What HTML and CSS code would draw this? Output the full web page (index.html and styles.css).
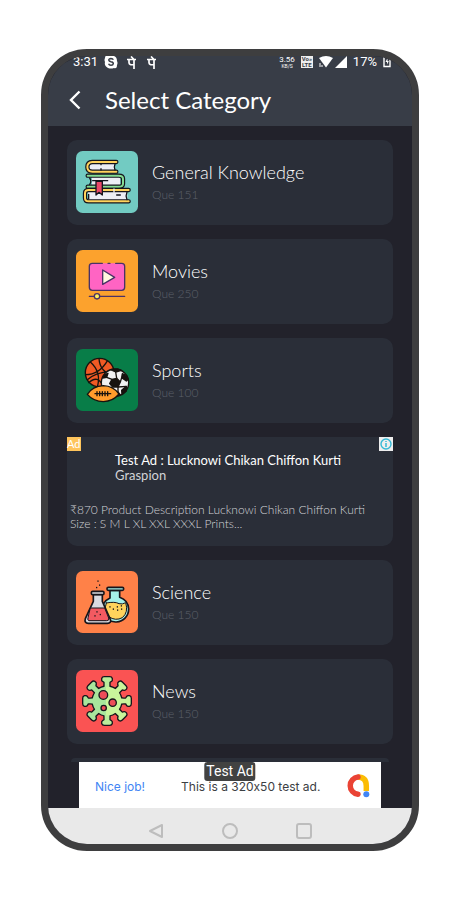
FILE: index.html
```
<!DOCTYPE html>
<html lang="en">
  <head>
    <meta charset="UTF-8" />
    <meta name="viewport" content="width=device-width, initial-scale=1.0" />
    <title>Select Category</title>
    <link rel="stylesheet" href="styles.css">
  </head>
  <body>
    <div class="phone">
      <header class="header">
        <div class="status">
          <div class="status-group status-left">
            <span class="clock">3:31</span>
            <svg class="icon-app" viewBox="0 0 14 14" width="14" height="14">
              <path d="M1 3Q1 0 4 1Q7 0 10 1Q13 2 13 6Q14 8 13 10Q13 14 10 13Q7 14 4 13Q0 11 1 7Q0 5 1 3Z" fill="#fff" />
              <path d="M9.3 4.7Q8.800 3.500 7 3.500Q4.700 3.600 4.800 5.200Q5 6.400 7 6.800Q9.400 7.200 9.300 8.600Q9.100 10.200 7 10.200Q5.100 10.200 4.600 8.800" fill="none" stroke="#383d47" stroke-width="1.500" />
            </svg>
            <svg class="icon-app" viewBox="0 0 14 14" width="14" height="14" fill="none" stroke="#fff" stroke-width="1.700">
              <path d="M3 4.500H12M10 4.500V14M5 4.500V7.500Q5 10.500 10 9.500M10 4.500L7 1.500" />
            </svg>
            <svg class="icon-app" viewBox="0 0 14 14" width="14" height="14" fill="none" stroke="#fff" stroke-width="1.700">
              <path d="M3 4.500H12M10 4.500V14M5 4.500V7.500Q5 10.500 10 9.500M10 4.500L7 1.500" />
            </svg>
          </div>
          <div class="status-group status-right">
            <span class="speed"><b>3.56</b><small>KB/S</small></span>
            <span class="volte"><b>Vo»</b><b>LTE</b></span>
            <svg viewBox="0 0 28 12" width="28" height="12" fill="#fff">
              <path d="M0 2Q7-2 14 2L7 11.500Z" />
              <path d="M28 0V12H16Z" />
              <path d="M1 7V11M3 9V11" stroke="#fff" stroke-width="1" />
            </svg>
            <span class="battery-text">17%</span>
            <svg viewBox="0 0 8 12" width="8" height="12">
              <path d="M1 0V10.500H7V2H5.500V0" fill="none" stroke="#fff" stroke-width="1.400" />
              <path d="M4.500 2L2.500 6H4V8.500L5.800 5H4.500Z" fill="#fff" />
            </svg>
          </div>
        </div>
        <div class="title-bar">
          <button class="back" aria-label="Back">
            <svg viewBox="0 0 12 20" width="12" height="20">
              <path d="M10.500 1.500L2 10L10.500 18.500" fill="none" stroke="#fff" stroke-width="2.400" />
            </svg>
          </button>
          <h1>Select Category</h1>
        </div>
      </header>

      <main class="list">
        <a class="card" href="#general-knowledge">
          <svg class="tile" viewBox="0 0 186 186">
            <rect width="186" height="186" rx="20" fill="#72cbc2" />
            <g stroke-linecap="round" stroke-linejoin="round">
              <path d="M118 36H52Q40 36 40 48T52 60H118Q112 48 118 36Z" fill="#edeef5" />
              <path d="M121 33H49Q34 34 34 48T49 62H121" fill="none" stroke="#15151c" stroke-width="13" />
              <path d="M121 33H49Q34 34 34 48T49 62H121" fill="none" stroke="#ffd35c" stroke-width="6" />
              <path d="M117 39Q113 48 117 57M75 38V41M75 53V57" fill="none" stroke="#15151c" stroke-width="4" />
              <path d="M48 78H132V102H48Z" fill="#edeef5" />
              <path d="M35 74H128Q141 74 141 83V98Q141 107 128 107H35" fill="none" stroke="#15151c" stroke-width="13" />
              <path d="M35 74H128Q141 74 141 83V98Q141 107 128 107H35" fill="none" stroke="#83dc91" stroke-width="6" />
              <path d="M41 81Q48 91 41 100M50 89H95" fill="none" stroke="#15151c" stroke-width="4" />
              <path d="M36 121H154V147H36Z" fill="#edeef5" />
              <path d="M158 117H38Q27 117 27 127V141Q27 151 38 151H158" fill="none" stroke="#15151c" stroke-width="13" />
              <path d="M158 117H38Q27 117 27 127V141Q27 151 38 151H158" fill="none" stroke="#ffd35c" stroke-width="6" />
              <path d="M153 123Q148 134 153 146M38 130V143M122 132H133" fill="none" stroke="#15151c" stroke-width="4" />
              <path d="M114 114V124" stroke="#edeef5" stroke-width="4" />
              <path d="M60 91H79V132L69 124L60 132Z" fill="#eb4868" stroke="#15151c" stroke-width="4" />
            </g>
          </svg>
          <span class="info">
            <span class="name">General Knowledge</span>
            <span class="count">Que 151</span>
          </span>
        </a>

        <a class="card" href="#movies">
          <svg class="tile" viewBox="0 0 186 186">
            <rect width="186" height="186" rx="20" fill="#fca22d" />
            <rect x="40" y="40" width="106" height="81" rx="9" fill="#ff64c3" />
            <path d="M79 40H49Q40 40 40 49V112Q40 121 49 121H137Q146 121 146 112V49Q146 40 137 40H119M96 40H102" fill="none" stroke="#4a3266" stroke-width="4" stroke-linecap="round" />
            <path d="M80 60L116 82L80 103Z" fill="#fff8df" stroke="#4a3266" stroke-width="4" stroke-linejoin="round" />
            <path d="M40 139H146" stroke="#4a3266" stroke-width="4" stroke-linecap="round" />
            <circle cx="63" cy="139" r="8" fill="#fff45c" stroke="#4a3266" stroke-width="4" />
          </svg>
          <span class="info">
            <span class="name">Movies</span>
            <span class="count">Que 250</span>
          </span>
        </a>

        <a class="card" href="#sports">
          <svg class="tile" viewBox="0 0 186 186">
            <rect width="186" height="186" rx="20" fill="#087d48" />
            <g stroke="#17130f" stroke-width="4" stroke-linejoin="round">
              <circle cx="71" cy="71" r="43" fill="#f15a24" />
              <path d="M43 39Q77 69 64 114M69 28Q71 69 111 79M28 77Q70 77 95 34M33 93Q64 65 114 69M37 102Q66 75 82 113" fill="none" />
              <circle cx="117" cy="101" r="41" fill="#f1f1f1" />
              <path d="M108 91L122 88L133 99L126 114H110L101 104Z" fill="#17130f" />
              <path d="M104 62L119 69L136 64L126 60ZM139 74L137 86L151 96L157 91L152 80ZM151 112L137 124L138 137L151 126ZM80 87L92 85L96 73L87 76ZM102 130L117 137L126 129L133 138L115 142Z" fill="#17130f" />
              <path d="M119 69L122 88M137 86L133 99M151 112L126 114M92 85L108 91M126 114L126 129" />
              <path d="M34 136Q49 112 82 110Q112 111 129 135Q111 157 82 158Q52 157 34 136Z" fill="#ff9c2c" />
              <path d="M57 134H104M63 128V140M71 128V140M79 128V140M87 128V140M95 128V140" stroke-linecap="round" />
            </g>
          </svg>
          <span class="info">
            <span class="name">Sports</span>
            <span class="count">Que 100</span>
          </span>
        </a>

        <section class="ad-card">
          <div class="ad-marks">
            <span class="ad-label">Ad</span>
            <button class="ad-info" aria-label="Ad information">
              <svg viewBox="0 0 14 14" width="14" height="14">
                <circle cx="7" cy="7" r="5" fill="none" stroke="#35b9d6" stroke-width="1.400" />
                <path d="M7 6V10M7 4V5" stroke="#35b9d6" stroke-width="1.500" />
              </svg>
            </button>
          </div>
          <div class="ad-heading">
            <strong>Test Ad : Lucknowi Chikan Chiffon Kurti</strong>
            <span>Graspion</span>
          </div>
          <p>₹870 Product Description Lucknowi Chikan Chiffon Kurti<br />Size : S M L XL XXL XXXL Prints...</p>
        </section>

        <a class="card" href="#science">
          <svg class="tile" viewBox="0 0 186 186">
            <rect width="186" height="186" rx="20" fill="#ff8148" />
            <g stroke="#17151b" stroke-width="5" stroke-linejoin="round" stroke-linecap="round">
              <path d="M102 58V81C85 89 78 101 80 119C82 141 101 154 121 153C143 151 158 135 158 114C157 96 146 84 131 79V58Z" fill="#a5f0e9" />
              <path d="M91 96Q117 91 129 98Q139 101 149 95Q158 124 139 140Q119 151 98 137Q82 121 91 96Z" fill="#ffd35c" stroke-width="3" />
              <rect x="93" y="49" width="50" height="9" rx="4" fill="#a5f0e9" />
              <path d="M52 70V91L28 143Q24 156 37 157H94Q107 156 103 145L79 91V70Z" fill="#dadbe1" />
              <path d="M44 111H86L98 141Q101 149 92 149H39Q33 148 36 140Z" fill="#f25a61" stroke-width="3" />
              <rect x="46" y="61" width="38" height="10" rx="4" fill="#dadbe1" />
              <path d="M66 30V31M71 42V43M62 49V50M63 122V123M57 134V135M73 130V131M102 107V108M112 114V115M124 107V108M136 104V105M137 114V115M125 117V118" stroke-width="4" />
            </g>
          </svg>
          <span class="info">
            <span class="name">Science</span>
            <span class="count">Que 150</span>
          </span>
        </a>

        <a class="card" href="#news">
          <svg class="tile" viewBox="0 0 186 186">
            <defs>
              <linearGradient id="virus-fill">
                <stop offset="45%" stop-color="#a8e69c" />
                <stop offset="45%" stop-color="#c9f59b" />
              </linearGradient>
              <path id="spike" d="M84 58Q87 47 86 37Q85 34 81 33Q78 31 79 26Q80 22 85 22H101Q106 22 107 26Q108 31 105 33Q101 34 100 37Q99 47 102 58Z" />
            </defs>
            <rect width="186" height="186" rx="20" fill="#fa5353" />
            <g stroke="#17151b" stroke-width="8" stroke-linejoin="round">
              <use href="#spike" />
              <use href="#spike" transform="rotate(45 93 93)" />
              <use href="#spike" transform="rotate(90 93 93)" />
              <use href="#spike" transform="rotate(135 93 93)" />
              <use href="#spike" transform="rotate(180 93 93)" />
              <use href="#spike" transform="rotate(225 93 93)" />
              <use href="#spike" transform="rotate(270 93 93)" />
              <use href="#spike" transform="rotate(315 93 93)" />
              <circle cx="93" cy="93" r="43" />
            </g>
            <g fill="#b9ed9b">
              <use href="#spike" />
              <use href="#spike" transform="rotate(45 93 93)" fill="#c9f59b" />
              <use href="#spike" transform="rotate(90 93 93)" fill="#c9f59b" />
              <use href="#spike" transform="rotate(135 93 93)" fill="#c9f59b" />
              <use href="#spike" transform="rotate(180 93 93)" />
              <use href="#spike" transform="rotate(225 93 93)" fill="#a8e69c" />
              <use href="#spike" transform="rotate(270 93 93)" fill="#a8e69c" />
              <use href="#spike" transform="rotate(315 93 93)" fill="#a8e69c" />
              <circle cx="93" cy="93" r="43" fill="url(#virus-fill)" />
            </g>
            <g fill="#ed4d59" stroke="#17151b" stroke-width="4">
              <circle cx="82" cy="75" r="13" />
              <circle cx="110" cy="98" r="11" />
              <circle cx="83" cy="114" r="8" />
            </g>
          </svg>
          <span class="info">
            <span class="name">News</span>
            <span class="count">Que 150</span>
          </span>
        </a>

        <div class="next-card"></div>
      </main>

      <aside class="banner">
        <span class="badge">Test Ad</span>
        <span class="nice">Nice job!</span>
        <span class="banner-text">This is a 320x50 test ad.</span>
        <svg viewBox="0 0 24 24" width="24" height="24" fill="none" stroke-width="5.500">
          <path d="M12 3Q20.300 3 20.300 12V17" stroke="#fbbc04" />
          <path d="M12 3A8.700 8.700 0 0 0 12 20.300" stroke="#ea4335" stroke-linecap="round" />
          <circle cx="20.300" cy="20.300" r="3" fill="#4285f4" />
        </svg>
      </aside>

      <nav class="nav">
        <button aria-label="Back">
          <svg viewBox="0 0 16 16" width="16" height="16"><path d="M14 2V14L2 8Z" /></svg>
        </button>
        <button aria-label="Home">
          <svg viewBox="0 0 16 16" width="16" height="16"><circle cx="8" cy="8" r="7" /></svg>
        </button>
        <button aria-label="Recent apps">
          <svg viewBox="0 0 16 16" width="16" height="16"><rect x="1" y="1" width="14" height="14" rx="2" /></svg>
        </button>
      </nav>
    </div>
  </body>
</html>
```
FILE: styles.css
```
* {
  box-sizing: border-box;
}

body {
  margin: 0;
  padding: 49px 41px;
  background-color: white;
  font-family: Lato, "Noto Sans", sans-serif;
}

button {
  display: flex;
  padding: 0;
  border: none;
  background: none;
  cursor: pointer;
}

svg {
  display: block;
  flex-shrink: 0;
}

.phone {
  max-width: 480px;
  margin: 0 auto;
  overflow: hidden;
  border: 7px solid #3e3e3f;
  border-radius: 46px;
  background-color: #22222b;
}

.header {
  background-color: #383d47;
  color: white;
}

.status {
  display: flex;
  justify-content: space-between;
  height: 12px;
  padding: 0 21px 0 25px;
  font-family: Roboto, sans-serif;
  font-size: 13px;
  line-height: 12px;
}

.status-group {
  display: flex;
  align-items: center;
}

.status-left {
  gap: 6px;
}

.status-right {
  gap: 6px;
}

.speed,
.volte {
  display: flex;
  flex-direction: column;
  align-items: center;
}

.speed b {
  font-size: 8px;
  font-weight: 400;
  line-height: 8px;
}

.speed small {
  font-size: 5px;
  line-height: 5px;
}

.volte {
  width: 12px;
  background-color: #eee;
  color: #383d47;
  font-size: 6px;
  line-height: 6px;
}

.title-bar {
  display: flex;
  align-items: center;
  gap: 24px;
  height: 58px;
  padding: 5px 21px 0;
}

.title-bar h1 {
  margin: 0;
  font-size: 24px;
  font-weight: 400;
  line-height: 30px;
}

.list {
  display: flex;
  flex-direction: column;
  gap: 14px;
  padding: 14px 19px 0;
}

.card {
  display: flex;
  align-items: center;
  gap: 14px;
  padding: 11px 9px 12px;
  border-radius: 10px;
  background-color: #2a2e38;
  color: #fff;
  text-decoration: none;
}

.tile {
  width: 62px;
  height: 62px;
}

.info {
  display: flex;
  flex-direction: column;
  gap: 4px;
}

.name {
  font-size: 18px;
  font-weight: 300;
  line-height: 22px;
}

.count {
  color: #5c6069;
  font-size: 12px;
  font-weight: 300;
  line-height: 16px;
}

.ad-card {
  padding-bottom: 15px;
  border-radius: 0 0 10px 10px;
  background-color: #2a2e38;
  color: #d2d3d7;
}

.ad-marks {
  display: flex;
  justify-content: space-between;
}

.ad-label {
  width: 14px;
  background-color: #fec45c;
  color: white;
  font-size: 11px;
  line-height: 14px;
}

.ad-info {
  background-color: #eee;
}

.ad-heading {
  display: flex;
  flex-direction: column;
  padding: 2px 0 0 48px;
  font-size: 13px;
  line-height: 15px;
}

.ad-heading strong {
  color: white;
  font-weight: 400;
}

.ad-card p {
  margin: 20px 0 0;
  padding: 0 3px;
  font-size: 12px;
  font-weight: 300;
  line-height: 14px;
}

.next-card {
  height: 4px;
  margin: 0 4px;
  border-radius: 8px 8px 0 0;
  background-color: #2a2e38;
}

.banner {
  position: relative;
  display: flex;
  align-items: center;
  height: 46px;
  margin: 0 31px;
  padding: 2px 11px 0 16px;
  background-color: white;
  color: #3c4043;
  font-family: Inter, Roboto, sans-serif;
  font-size: 12px;
  font-variant-ligatures: no-contextual;
  white-space: nowrap;
}

.banner svg {
  margin-left: auto;
}

.nice {
  color: #4285f4;
}

.banner-text {
  margin-left: 36px;
}

.badge {
  position: absolute;
  top: 0;
  left: 50%;
  transform: translateX(-50%);
  padding: 0 2px;
  border-radius: 3px;
  background-color: #424242;
  color: white;
  font-family: Roboto, sans-serif;
  font-size: 14px;
  line-height: 19px;
}

.nav {
  display: flex;
  align-items: center;
  justify-content: center;
  gap: 58px;
  height: 36px;
  padding-top: 10px;
  background-color: #e9e9e9;
}

.nav svg {
  fill: none;
  stroke: #bdbdbd;
  stroke-width: 2;
  stroke-linejoin: round;
}
```
